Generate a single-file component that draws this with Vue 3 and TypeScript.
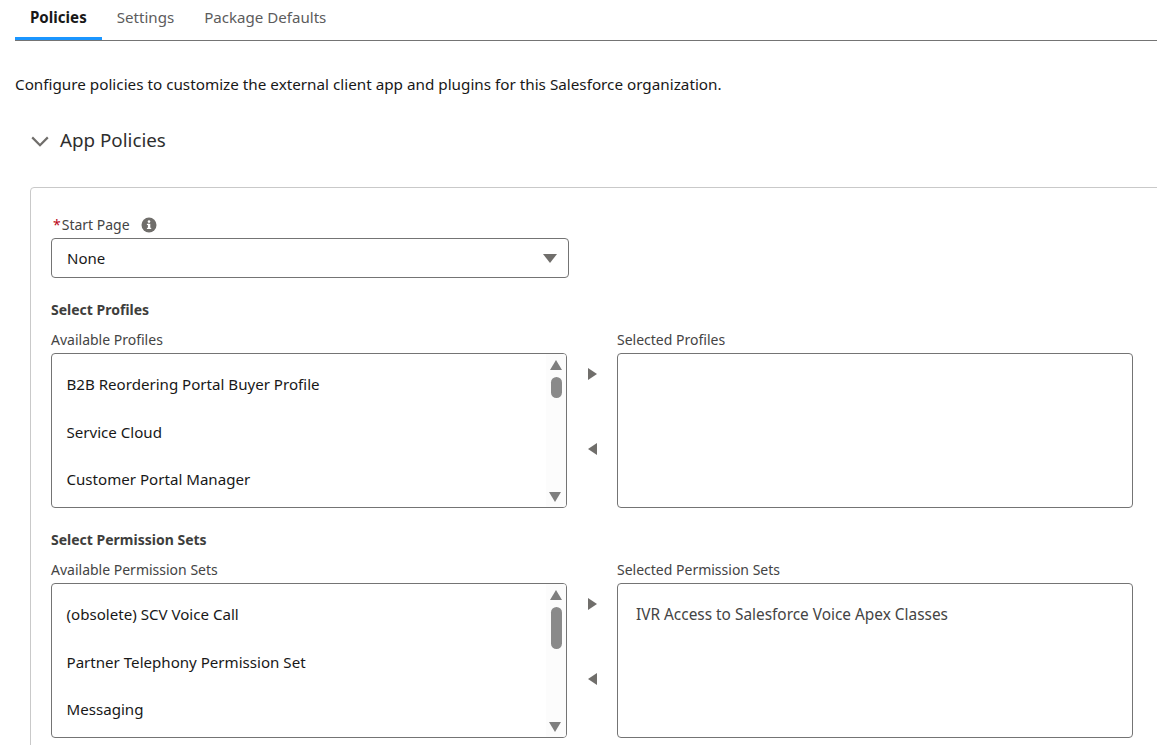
<script setup lang="ts">
interface Box {
  heading: string
  leftLabel: string
  rightLabel: string
  left: string[]
  right: string[]
  thumb: number
}
const boxes: Box[] = [
  {
    heading: 'Select Profiles',
    leftLabel: 'Available Profiles',
    rightLabel: 'Selected Profiles',
    left: ['B2B Reordering Portal Buyer Profile', 'Service Cloud', 'Customer Portal Manager'],
    right: [],
    thumb: 21,
  },
  {
    heading: 'Select Permission Sets',
    leftLabel: 'Available Permission Sets',
    rightLabel: 'Selected Permission Sets',
    left: ['(obsolete) SCV Voice Call', 'Partner Telephony Permission Set', 'Messaging'],
    right: ['IVR Access to Salesforce Voice Apex Classes'],
    thumb: 42,
  },
]
</script>

<template>
  <div class="page">
    <nav class="tabs">
      <a class="tab active">Policies</a>
      <a class="tab">Settings</a>
      <a class="tab">Package Defaults</a>
    </nav>
    <p class="intro">Configure policies to customize the external client app and plugins for this Salesforce organization.</p>
    <div class="section-head">
      <svg class="chev" width="18" height="11" viewBox="0 0 18 11"><path d="M1.2 1.4 9 9.2l7.8-7.8" fill="none" stroke="#706e6b" stroke-width="2.2" /></svg>
      <h2>App Policies</h2>
    </div>
    <section class="card">
      <div class="field-label">
        <span class="req">*</span><span>Start Page</span>
        <svg class="info" width="16" height="16" viewBox="0 0 16 16">
          <circle cx="8" cy="8" r="7.5" fill="#706e6b" />
          <rect x="6.9" y="6.8" width="2.4" height="5" fill="#fff" />
          <rect x="5.9" y="6.8" width="2" height="1.2" fill="#fff" />
          <rect x="5.9" y="10.8" width="4.3" height="1.2" fill="#fff" />
          <circle cx="8" cy="4.6" r="1.3" fill="#fff" />
        </svg>
      </div>
      <div class="select">
        <span>None</span>
        <i class="tri down lg"></i>
      </div>
      <div v-for="box in boxes" :key="box.heading" class="dual">
        <h3>{{ box.heading }}</h3>
        <div class="cols">
          <div class="col left">
            <div class="lab">{{ box.leftLabel }}</div>
            <div class="list">
              <ul>
                <li v-for="item in box.left" :key="item">{{ item }}</li>
              </ul>
              <div class="scroll">
                <i class="tri up"></i>
                <b class="thumb" :style="{ height: box.thumb + 'px' }"></b>
                <i class="tri down bottom"></i>
              </div>
            </div>
          </div>
          <div class="moves">
            <i class="tri right"></i>
            <i class="tri leftward"></i>
          </div>
          <div class="col right-col">
            <div class="lab">{{ box.rightLabel }}</div>
            <div class="list chosen">
              <ul>
                <li v-for="item in box.right" :key="item">{{ item }}</li>
              </ul>
            </div>
          </div>
        </div>
      </div>
    </section>
  </div>
</template>

<style>
html, body { margin: 0; background: #fff; }
</style>

<style scoped>
.page {
  width: 1157px;
  height: 745px;
  overflow: hidden;
  font-family: "Noto Sans", "Open Sans", sans-serif;
  font-size: 14px;
  color: #181818;
  box-sizing: border-box;
  padding-left: 15px;
}
.tabs {
  display: flex;
  height: 41px;
  box-sizing: border-box;
  border-bottom: 1px solid #747474;
}
.tab {
  padding: 8px 15px 0;
  height: 40px;
  box-sizing: border-box;
  line-height: 18px;
  font-size: 15.1px;
  color: #5c5c5c;
}
.tab.active {
  color: #181818;
  font-weight: 700;
  border-bottom: 3px solid #1b96ff;
}
.intro {
  margin: 34px 0 0;
  line-height: 18px;
  font-size: 15.25px;
  color: #181818;
}
.section-head {
  display: flex;
  align-items: center;
  margin: 32px 0 0 16px;
  height: 30px;
}
.chev { margin-right: 11px; margin-top: 2px; }
h2 {
  margin: 0;
  font-size: 18.8px;
  font-weight: 400;
  color: #2e2e2e;
}
.card {
  width: 1300px;
  margin: 32px 0 0 15px;
  box-sizing: border-box;
  border: 1px solid #c9c9c9;
  border-radius: 4px;
  padding: 28px 0 0 20px;
  height: 700px;
}
.field-label {
  display: flex;
  align-items: center;
  height: 18px;
  color: #444;
  line-height: 18px;
}
.req { color: #ba0517; margin: 0 1px 0 2px; }
.info { margin-left: 11px; }
.select {
  width: 518px;
  height: 40px;
  margin-top: 4px;
  box-sizing: border-box;
  border: 1px solid #747474;
  border-radius: 4px;
  display: flex;
  align-items: center;
  justify-content: space-between;
  padding: 0 11px 0 15px;
  font-size: 15px;
}
.dual { width: 1082px; }
h3 {
  margin: 22px 0 0;
  font-size: 14px;
  line-height: 20px;
  font-weight: 700;
  color: #3e3e3c;
}
.cols { display: flex; margin-top: 11px; }
.col.left { width: 516px; }
.right-col { width: 516px; }
.lab { line-height: 18px; color: #444; height: 18px; margin-bottom: 4px; }
.list {
  height: 155px;
  box-sizing: border-box;
  border: 1px solid #747474;
  border-radius: 4px;
  display: flex;
  overflow: hidden;
  font-size: 15.1px;
}
ul {
  list-style: none;
  margin: 0;
  padding: 7px 0 0 14.5px;
  flex: 1;
}
li { height: 47.5px; line-height: 47.5px; }
.chosen { font-size: 15.4px; }
.chosen ul { padding-left: 18px; }
.chosen li { color: #444; }
.scroll {
  width: 20px;
  background: #fcfcfc;
  position: relative;
  display: flex;
  flex-direction: column;
  align-items: center;
  padding-top: 6px;
  box-sizing: border-box;
}
.thumb {
  display: block;
  width: 11px;
  border-radius: 6px;
  background: #8a8a8a;
  margin-top: 7px;
}
.tri { display: block; width: 0; height: 0; }
.tri.up { border: 6.5px solid transparent; border-top: 0; border-bottom: 10px solid #7f7f7f; }
.tri.down { border: 6.5px solid transparent; border-bottom: 0; border-top: 10px solid #7f7f7f; }
.tri.lg { border-width: 9px 7px 0; border-color: #706e6b transparent transparent; }
.tri.bottom { position: absolute; bottom: 5px; left: 3px; }
.moves {
  width: 50px;
  display: flex;
  flex-direction: column;
  align-items: center;
  padding-top: 37px;
  box-sizing: border-box;
  gap: 63px;
}
.tri.right { border: 6.5px solid transparent; border-right: 0; border-left: 9px solid #706e6b; }
.tri.leftward { border: 6.5px solid transparent; border-left: 0; border-right: 9px solid #706e6b; }
</style>
